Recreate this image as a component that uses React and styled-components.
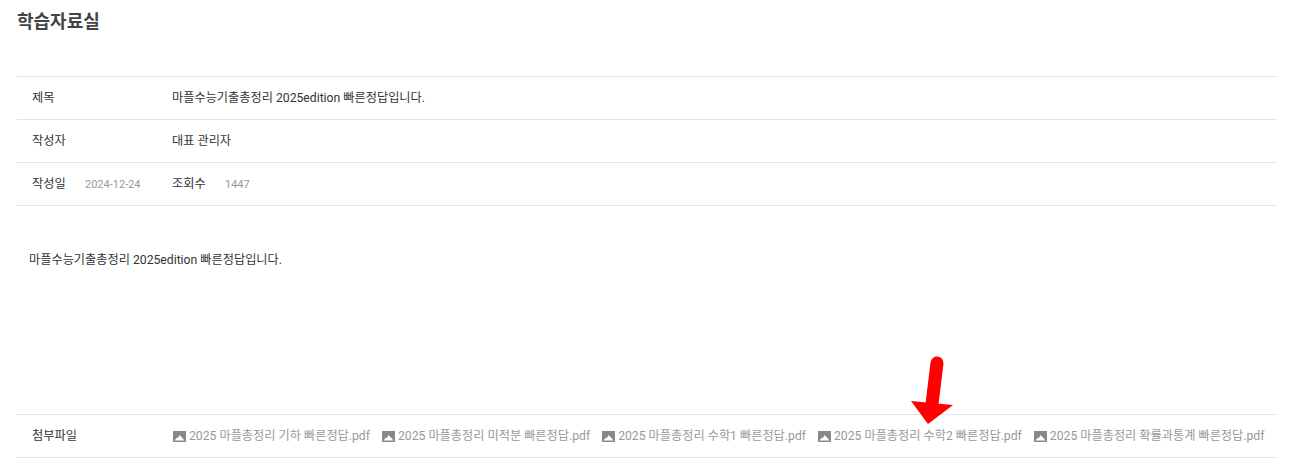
import React from 'react'
import styled, { createGlobalStyle } from 'styled-components'

const GlobalStyle = createGlobalStyle`
  html, body {
    margin: 0;
    padding: 0;
    background: #fff;
    font-family: Roboto, "Noto Sans CJK KR", sans-serif;
  }
`

const Page = styled.div`
  position: relative;
  height: 475px;
  padding: 0 16px 0 17px;
  box-sizing: border-box;
  overflow: hidden;
`

const Title = styled.h2`
  margin: 0;
  height: 76px;
  padding-top: 10px;
  box-sizing: border-box;
  font-size: 18px;
  line-height: 24px;
  font-weight: 700;
  color: #444;
`

const Row = styled.div`
  display: flex;
  align-items: center;
  height: ${p => (p.$first ? 44 : 43)}px;
  box-sizing: border-box;
  padding: 0 0 2px 15px;
  border-top: ${p => (p.$first ? '1px solid #e5e5e5' : '0')};
  border-bottom: 1px solid #e5e5e5;
  font-size: 12.2px;
  color: #333;
`

const Label = styled.span`
  flex: 0 0 ${p => p.$width || 140}px;
  color: #333;
`

const Meta = styled.span`
  flex: 0 0 ${p => p.$width || 87}px;
  margin-top: 2px;
  font-size: 11px;
  color: #999;
`

const Body = styled.div`
  height: 208px;
  box-sizing: border-box;
  padding: 46px 0 0 12px;
  font-size: 12.2px;
  line-height: 16px;
  color: #333;
`

const Files = styled.div`
  display: flex;
  align-items: center;
  gap: 11px;
`

const FileLink = styled.span`
  display: inline-flex;
  align-items: center;
  gap: 3px;
  font-size: 12.2px;
  color: #999;
  white-space: nowrap;
`

const FileIcon = styled.svg`
  flex: none;
  margin: 2px 0 0 1px;
`

const Arrow = styled.svg`
  position: absolute;
  left: 905px;
  top: 352px;
`

const ImageIcon = () => (
  <FileIcon width="13" height="11" viewBox="0 0 13 11">
    <rect width="13" height="11" fill="#8c8782" />
    <path d="M1.5 9.5 L4 6.5 L5 7 L6.5 4 L8.5 6 L11.5 9.5 Z" fill="#fff" />
  </FileIcon>
)

const files = [
  '2025 마플총정리 기하 빠른정답.pdf',
  '2025 마플총정리 미적분 빠른정답.pdf',
  '2025 마플총정리 수학1 빠른정답.pdf',
  '2025 마플총정리 수학2 빠른정답.pdf',
  '2025 마플총정리 확률과통계 빠른정답.pdf'
]

const App = () => (
  <Page>
    <GlobalStyle />
    <Title>학습자료실</Title>
    <Row $first>
      <Label>제목</Label>
      <span>마플수능기출총정리 2025edition 빠른정답입니다.</span>
    </Row>
    <Row>
      <Label>작성자</Label>
      <span>대표 관리자</span>
    </Row>
    <Row>
      <Label $width={53}>작성일</Label>
      <Meta>2024-12-24</Meta>
      <Label $width={53}>조회수</Label>
      <Meta>1447</Meta>
    </Row>
    <Body>마플수능기출총정리 2025edition 빠른정답입니다.</Body>
    <Row $first>
      <Label>첨부파일</Label>
      <Files>
        {files.map(name => (
          <FileLink key={name}>
            <ImageIcon />
            {name}
          </FileLink>
        ))}
      </Files>
    </Row>
    <Arrow width="52" height="76" viewBox="0 0 52 76">
      <path d="M32 11 L27 52" stroke="#fe0000" strokeWidth="13" strokeLinecap="round" />
      <path d="M6 49 L48 53 L23 72 Z" fill="#fe0000" />
    </Arrow>
  </Page>
)

export default App
